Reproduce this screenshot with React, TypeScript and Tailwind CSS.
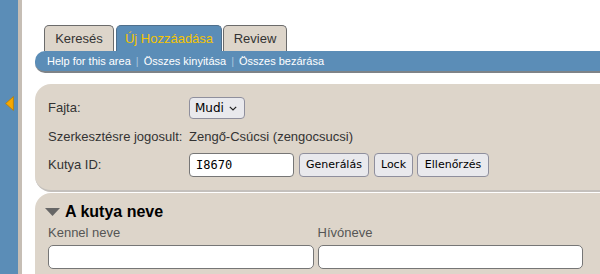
import React from "react";

export default function App() {
  const ctl = "font-['DejaVu_Sans',sans-serif] text-[11px] text-black";
  return (
    <div className="flex h-[274px] w-[600px] overflow-hidden bg-white font-['Liberation_Sans',Arial,sans-serif]">
      {/* sidebar */}
      <div className="flex w-[22px] shrink-0">
        <div className="w-[18px] bg-[#5b8db7] pl-[5px] pt-[96px]">
          <svg width="9" height="15" viewBox="0 0 9 15">
            <polygon points="0.6,7.5 8.4,0.6 8.4,14.4" fill="#f6a800" stroke="#b77c00" strokeWidth="0.8" />
          </svg>
        </div>
        <div className="w-[4px] bg-[#c6beb5]" />
      </div>

      {/* main */}
      <div className="flex min-w-0 flex-1 flex-col pl-[13px] pt-[25px]">
        {/* tabs */}
        <div className="flex h-[26px] items-stretch pl-[9px] text-[13px]">
          <div className="flex w-[70px] items-center justify-center rounded-t-[5px] border border-b-0 border-[#6b6b6b] bg-[#ddd5ca] text-[#333]">
            Keresés
          </div>
          <div className="ml-[2px] flex w-[106px] items-center justify-center rounded-t-[5px] border border-b-0 border-[#4f6f8c] bg-[#5b8db7] text-[#f5c400]">
            Új Hozzáadása
          </div>
          <div className="ml-[1px] flex w-[64px] items-center justify-center rounded-t-[5px] border border-b-0 border-[#6b6b6b] bg-[#ddd5ca] text-[#333]">
            Review
          </div>
        </div>

        {/* action bar */}
        <div className="flex h-[22px] items-center rounded-l-[10px] border-b-2 border-[#7e8388] bg-[#5b8db7] pl-[12px] text-[11px] text-white">
          <span>Help for this area</span>
          <span className="mx-[5px] text-[#a9c4dd]">|</span>
          <span>Összes kinyitása</span>
          <span className="mx-[5px] text-[#a9c4dd]">|</span>
          <span>Összes bezárása</span>
        </div>

        {/* panel 1 */}
        <div className="mt-[11px] rounded-l-[16px] border-b-2 border-[#c4c0bc] bg-[#ddd5ca] pb-[13px] pl-[13px] pt-[13px] text-[13px] text-[#333]">
          <div className="flex h-[22px] items-center">
            <div className="w-[141px]">Fajta:</div>
            <div className={`flex h-[22px] w-[56px] items-center justify-between rounded-[4px] border border-[#8f8f9d] bg-[#e9e9ed] pl-[5px] pr-[7px] ${ctl} text-[12px]`}>
              <span>Mudi</span>
              <svg width="8" height="5" viewBox="0 0 8 5">
                <polyline points="0.8,0.8 4,4 7.2,0.8" fill="none" stroke="#222" strokeWidth="1.2" />
              </svg>
            </div>
          </div>
          <div className="mt-[10px] flex h-[16px] items-center">
            <div className="w-[141px]">Szerkesztésre jogosult:</div>
            <div>Zengő-Csúcsi (zengocsucsi)</div>
          </div>
          <div className="mt-[8px] flex h-[24px] items-center">
            <div className="w-[141px]">Kutya ID:</div>
            <div className="flex h-[24px] w-[105px] items-center rounded-[4px] border border-[#767676] bg-white px-[6px] font-['DejaVu_Sans_Mono',monospace] text-[12px] text-black">
              I8670
            </div>
            <button className={`ml-[5px] h-[24px] w-[70px] rounded-[4px] border border-[#8f8f9d] bg-[#e9e9ed] ${ctl}`}>
              Generálás
            </button>
            <button className={`ml-[5px] h-[24px] w-[39px] rounded-[4px] border border-[#8f8f9d] bg-[#e9e9ed] ${ctl}`}>
              Lock
            </button>
            <button className={`ml-[4px] h-[24px] w-[72px] rounded-[4px] border border-[#8f8f9d] bg-[#e9e9ed] ${ctl}`}>
              Ellenőrzés
            </button>
          </div>
        </div>

        {/* panel 2 */}
        <div className="mt-[1px] flex-1 rounded-tl-[16px] bg-[#ddd5ca] pl-[13px] pt-[9px]">
          <div className="-ml-[3px] flex h-[20px] items-center">
            <svg width="15" height="8" viewBox="0 0 15 8">
              <polygon points="0,0 15,0 7.5,8" fill="#666" />
            </svg>
            <span className="ml-[5px] text-[16px] font-bold text-black">A kutya neve</span>
          </div>
          <div className="mt-[3px] grid w-[535px] grid-cols-2 gap-x-[4px] text-[13px] text-[#555]">
            <div className="flex h-[16px] items-center">Kennel neve</div>
            <div className="flex h-[16px] items-center">Hívóneve</div>
            <div className="mt-[4px] h-[24px] rounded-[5px] border border-[#767676] bg-white" />
            <div className="mt-[4px] h-[24px] rounded-[5px] border border-[#767676] bg-white" />
          </div>
        </div>
      </div>
    </div>
  );
}
